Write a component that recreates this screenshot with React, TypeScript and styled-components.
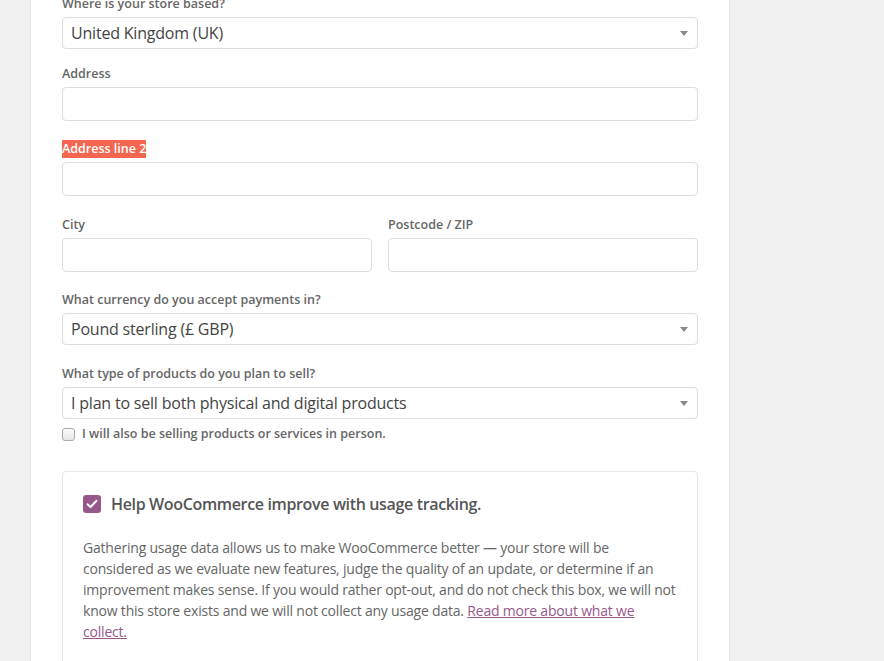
import React from "react";
import styled, { createGlobalStyle } from "styled-components";

const Global = createGlobalStyle`
  html, body { margin: 0; padding: 0; background: #f1f1f1; }
  body { font-family: "Open Sans", "Noto Sans", sans-serif; overflow: hidden; }
  * { box-sizing: border-box; }
`;

const Page = styled.div`
  display: flex;
  padding-left: 30px;
  height: 661px;
  overflow: hidden;
`;

const Card = styled.div`
  width: 700px;
  margin-top: -4px;
  background: #fff;
  border-left: 1px solid #e8e8e8;
  border-right: 1px solid #e8e8e8;
  padding: 0 31px;
  display: flex;
  flex-direction: column;
`;

const Field = styled.div<{ $mb?: number }>`
  display: flex;
  flex-direction: column;
  margin-bottom: ${(p) => (p.$mb ?? 20)}px;
`;

const Label = styled.label<{ $hl?: boolean }>`
  display: block;
  font-size: 12.5px;
  line-height: 16px;
  font-weight: 600;
  color: #666;
  margin-bottom: 5px;
  span {
    background: ${(p) => (p.$hl ? "#f4664f" : "transparent")};
    color: ${(p) => (p.$hl ? "#fff" : "inherit")};
    padding-bottom: 1px;
  }
`;

const Input = styled.div`
  height: 34px;
  border: 1px solid #ddd;
  border-radius: 4px;
  background: #fff;
`;

const Select = styled.div`
  height: 32px;
  border: 1px solid #ddd;
  border-radius: 4px;
  background: #fff;
  display: flex;
  align-items: center;
  justify-content: space-between;
  padding: 0 8px 0 8px;
  font-size: 16px;
  letter-spacing: -0.2px;
  color: #444;
`;

const Arrow = styled.span`
  width: 0;
  height: 0;
  border-left: 4px solid transparent;
  border-right: 4px solid transparent;
  border-top: 5px solid #888;
  margin-right: 1px;
`;

const Row = styled.div`
  display: grid;
  grid-template-columns: 1fr 1fr;
  column-gap: 16px;
`;

const CheckRow = styled.label`
  display: flex;
  align-items: center;
  gap: 7px;
  font-size: 12.5px;
  font-weight: 600;
  color: #666;
  line-height: 16px;
`;

const NativeBox = styled.span`
  width: 13px;
  height: 13px;
  border: 1px solid #a9a9a9;
  border-radius: 3px;
  background: linear-gradient(#fcfcfc, #e6e6e6);
`;

const UsageBox = styled.div`
  margin-top: 29px;
  border: 1px solid #e6e6e6;
  border-radius: 4px;
  padding: 20px 20px 40px;
`;

const UsageHead = styled.div`
  display: flex;
  align-items: center;
  gap: 10px;
  font-size: 16px;
  letter-spacing: -0.35px;
  line-height: 24px;
  font-weight: 600;
  color: #555;
`;

const PurpleBox = styled.span`
  width: 18px;
  height: 18px;
  border-radius: 3px;
  background: #96588a;
  display: flex;
  align-items: center;
  justify-content: center;
`;

const Para = styled.p`
  margin: 21px 0 0;
  font-size: 14px;
  letter-spacing: -0.2px;
  line-height: 21px;
  color: #666;
  white-space: nowrap;
`;

const Link = styled.a`
  color: #96588a;
  text-decoration: underline;
`;

export default function App() {
  return (
    <>
      <Global />
      <Page>
        <Card>
          <Field $mb={17}>
            <Label>Where is your store based?</Label>
            <Select>
              <span>United Kingdom (UK)</span>
              <Arrow />
            </Select>
          </Field>
          <Field>
            <Label>Address</Label>
            <Input />
          </Field>
          <Field $mb={21}>
            <Label $hl>
              <span>Address line 2</span>
            </Label>
            <Input />
          </Field>
          <Row>
            <Field>
              <Label>City</Label>
              <Input />
            </Field>
            <Field>
              <Label>Postcode / ZIP</Label>
              <Input />
            </Field>
          </Row>
          <Field $mb={21}>
            <Label>What currency do you accept payments in?</Label>
            <Select>
              <span>Pound sterling (£ GBP)</span>
              <Arrow />
            </Select>
          </Field>
          <Field $mb={7}>
            <Label>What type of products do you plan to sell?</Label>
            <Select>
              <span>I plan to sell both physical and digital products</span>
              <Arrow />
            </Select>
          </Field>
          <CheckRow>
            <NativeBox />
            I will also be selling products or services in person.
          </CheckRow>
          <UsageBox>
            <UsageHead>
              <PurpleBox>
                <svg width="12" height="10" viewBox="0 0 12 10">
                  <path d="M1.5 5.2 L4.5 8 L10.5 1.8" fill="none" stroke="#fff" strokeWidth="2" strokeLinecap="round" strokeLinejoin="round" />
                </svg>
              </PurpleBox>
              Help WooCommerce improve with usage tracking.
            </UsageHead>
            <Para>
              Gathering usage data allows us to make WooCommerce better — your store will be
              <br />
              considered as we evaluate new features, judge the quality of an update, or determine if an
              <br />
              improvement makes sense. If you would rather opt-out, and do not check this box, we will not
              <br />
              know this store exists and we will not collect any usage data. <Link href="#">Read more about what we</Link>
              <br />
              <Link href="#">collect.</Link>
            </Para>
          </UsageBox>
        </Card>
      </Page>
    </>
  );
}
